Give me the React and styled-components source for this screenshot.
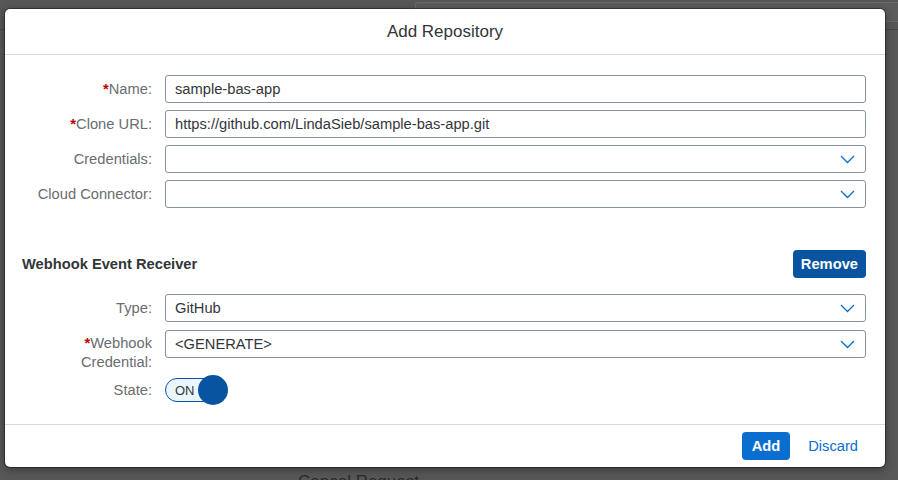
import React from "react";
import styled, { createGlobalStyle } from "styled-components";

const GlobalStyle = createGlobalStyle`
  html, body {
    margin: 0;
    padding: 0;
    background: #565656;
    font-family: "Liberation Sans", Arial, sans-serif;
  }
  * {
    box-sizing: border-box;
  }
`;

const Chevron = () => (
  <svg width="15" height="9" viewBox="0 0 15 9">
    <polyline
      points="1,1 7.5,7.5 14,1"
      fill="none"
      stroke="#0a6ed1"
      strokeWidth="1.3"
    />
  </svg>
);

const mainFields = [
  { label: "Name:", required: true, value: "sample-bas-app" },
  {
    label: "Clone URL:",
    required: true,
    value: "https://github.com/LindaSieb/sample-bas-app.git",
  },
  { label: "Credentials:", select: true },
  { label: "Cloud Connector:", select: true },
];

const App = () => {
  return (
    <Screen>
      <GlobalStyle />
      <BackTab />
      <BackRule />
      <BackText>Cancel Request</BackText>

      <Dialog>
        <Header>Add Repository</Header>

        <Body>
          <FormGrid>
            {mainFields.map((f) => (
              <React.Fragment key={f.label}>
                <Label>
                  {f.required && <Star>*</Star>}
                  {f.label}
                </Label>
                <Field>
                  <span>{f.value}</span>
                  {f.select && <Chevron />}
                </Field>
              </React.Fragment>
            ))}
          </FormGrid>

          <SectionHead>
            <SectionTitle>Webhook Event Receiver</SectionTitle>
            <EmphButton $dark>Remove</EmphButton>
          </SectionHead>

          <FormGrid $top={16} $gap={8}>
            <Label>Type:</Label>
            <Field>
              <span>GitHub</span>
              <Chevron />
            </Field>

            <Label $multiline>
              <Star>*</Star>Webhook
              <br />
              Credential:
            </Label>
            <Field $alignTop>
              <span>&lt;GENERATE&gt;</span>
              <Chevron />
            </Field>

            <Label>State:</Label>
            <SwitchWrap>
              <SwitchTrack>
                <SwitchText>ON</SwitchText>
                <Knob />
              </SwitchTrack>
            </SwitchWrap>
          </FormGrid>
        </Body>

        <Footer>
          <EmphButton>Add</EmphButton>
          <TextButton>Discard</TextButton>
        </Footer>
      </Dialog>
    </Screen>
  );
};

export default App;

const Screen = styled.div`
  position: relative;
  width: 898px;
  height: 480px;
  overflow: hidden;
  background: #575757;
  padding: 9px 0 0 5px;
`;

const BackTab = styled.div`
  position: absolute;
  left: 415px;
  top: 2px;
  width: 500px;
  height: 20px;
  border: 1px solid #6a6a6a;
  border-radius: 2px;
  background: #5c5c5c;
`;

const BackRule = styled.div`
  position: absolute;
  left: 0;
  right: 0;
  top: 29px;
  height: 1px;
  background: #474747;
`;

const BackText = styled.div`
  position: absolute;
  left: 298px;
  top: 472px;
  font-size: 17px;
  line-height: 20px;
  color: #2a2a2a;
`;

const Dialog = styled.div`
  position: relative;
  width: 880px;
  background: #fff;
  border-radius: 5px;
  box-shadow: 0 0 0 1px rgba(0, 0, 0, 0.35), 0 2px 10px rgba(0, 0, 0, 0.4);
  overflow: hidden;
`;

const Header = styled.div`
  height: 46px;
  border-bottom: 1px solid #d9d9d9;
  display: flex;
  align-items: center;
  justify-content: center;
  font-size: 17px;
  color: #32363a;
`;

const Body = styled.div`
  padding: 20px 19px 20px 17px;
`;

const FormGrid = styled.div`
  display: grid;
  grid-template-columns: 130px 1fr;
  column-gap: 13px;
  row-gap: ${(p) => p.$gap || 7}px;
  align-items: center;
  margin-top: ${(p) => p.$top || 0}px;
`;

const Label = styled.div`
  text-align: right;
  font-size: 14.7px;
  color: #6a6d70;
  white-space: nowrap;
  ${(p) =>
    p.$multiline &&
    `
    align-self: start;
    padding-top: 4px;
    line-height: 19px;
    margin-bottom: -4px;
  `}
`;

const Star = styled.span`
  color: #bb0000;
  font-weight: bold;
`;

const Field = styled.div`
  height: 28px;
  border: 1px solid #89919a;
  border-radius: 3px;
  padding: 0 10px 0 9px;
  display: flex;
  align-items: center;
  justify-content: space-between;
  font-size: 14.7px;
  color: #32363a;
  ${(p) => p.$alignTop && "align-self: start;"}
`;

const SectionHead = styled.div`
  margin-top: 42px;
  height: 28px;
  display: flex;
  align-items: center;
  justify-content: space-between;
`;

const SectionTitle = styled.div`
  font-size: 14.7px;
  font-weight: bold;
  color: #32363a;
`;

const EmphButton = styled.button`
  height: 28px;
  padding: 0 ${(p) => (p.$dark ? 8 : 10)}px;
  border: none;
  border-radius: 4px;
  background: ${(p) => (p.$dark ? "#0854a0" : "#0a6ed1")};
  color: #fff;
  font-family: inherit;
  font-size: 14.7px;
  font-weight: bold;
`;

const TextButton = styled.button`
  height: 28px;
  padding: 0 8px;
  border: none;
  background: transparent;
  color: #0a6ed1;
  font-family: inherit;
  font-size: 14.7px;
`;

const SwitchWrap = styled.div`
  height: 28px;
  display: flex;
  align-items: center;
`;

const SwitchTrack = styled.div`
  position: relative;
  width: 58px;
  height: 24px;
  border: 1px solid #0854a0;
  border-radius: 12px;
  background: #ebf5fe;
  display: flex;
  align-items: center;
  padding-left: 9px;
`;

const SwitchText = styled.span`
  font-size: 13px;
  color: #32363a;
`;

const Knob = styled.div`
  position: absolute;
  right: -6px;
  top: -4px;
  width: 30px;
  height: 30px;
  border-radius: 50%;
  background: #0854a0;
`;

const Footer = styled.div`
  height: 43px;
  border-top: 1px solid #d9d9d9;
  display: flex;
  align-items: center;
  justify-content: flex-end;
  gap: 10px;
  padding-right: 19px;
`;
